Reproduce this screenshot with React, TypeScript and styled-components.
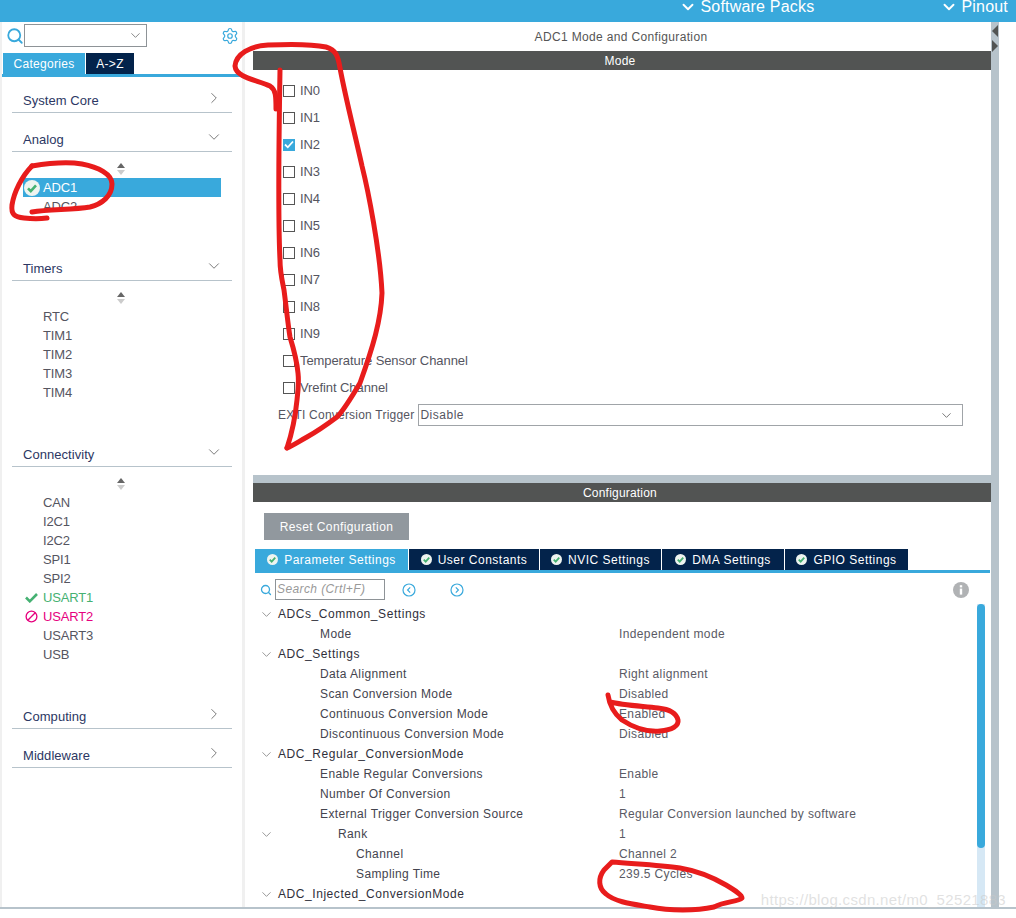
import React from "react";
import styled, { createGlobalStyle } from "styled-components";
import { ChevronDown, ChevronRight, Search, Settings } from "lucide-react";

const GlobalStyle = createGlobalStyle`
  html, body { margin: 0; padding: 0; background: #fff; }
  body { font-family: "Liberation Sans", Arial, sans-serif; overflow: hidden; }
  * { box-sizing: border-box; }
`;

const BLUE = "#39a9dc";
const NAVY = "#03234b";
const GREY = "#b7c3cb";
const BAR = "#525453";
const GREEN = "#45b172";

function CheckDot({ size = 12 }: { size?: number }) {
  return (
    <svg width={size} height={size} viewBox="0 0 16 16">
      <circle cx="8" cy="8" r="8" fill="#eef4f0" />
      <path d="M4 8.3l2.8 2.8L12 5.4" fill="none" stroke={GREEN} strokeWidth="2.6" />
    </svg>
  );
}

function SortArrows() {
  return (
    <svg width="8" height="12" viewBox="0 0 8 12">
      <path d="M4 0l4 5H0z" fill="#666" />
      <path d="M4 12L0 7h8z" fill="#ccc" />
    </svg>
  );
}

function Annotations() {
  return (
    <Ink viewBox="0 0 1016 918">
      <g fill="none" stroke="#e81c1c" strokeLinecap="round" strokeLinejoin="round" strokeWidth="5">
        <path d="M276 109C276 96 276 90 270 86C258 80 236 78 235 66C236 54 250 46 268 45C290 44 312 44 326 47C336 50 338 56 340 68C346 100 354 130 362 166C368 190 380 250 382 293C381 320 373 347 360 383C350 400 340 414 337 417C325 426 316 432 307 437C298 442 292 446 287 448" />
        <path d="M280 70C279 130 278 220 280 260C280 272 282 280 284 290C286 305 288 325 290 337C294 350 297 362 298 373C299 382 298 392 297 400C295 420 291 436 287 448" />
        <path d="M32 166C50 163 70 162 82 164C98 167 112 174 112 184C112 196 102 204 90 207C72 210 50 209 32 212" />
        <path d="M32 166C22 176 14 192 12 205C11 214 14 217 24 218C32 219 40 219 47 218" />
        <path d="M608 695C609 702 612 712 622 720C634 728 648 732 660 731C672 730 679 726 678 720C676 712 668 709 658 708C640 706 622 705 610 702" />
        <path d="M612 862C635 864 660 865 680 868C698 871 714 878 726 885C736 891 742 895 742 898C738 902 726 901 714 907C696 911 670 911 650 907C632 904 615 902 606 894C598 888 598 878 604 870C608 866 610 864 612 862Z" />
      </g>
    </Ink>
  );
}

interface Category {
  name: string;
  open: boolean;
  items?: { label: string; state?: "ok" | "off" | "selected" }[];
}

const categories: Category[] = [
  { name: "System Core", open: false },
  {
    name: "Analog",
    open: true,
    items: [{ label: "ADC1", state: "selected" }, { label: "ADC2" }],
  },
  {
    name: "Timers",
    open: true,
    items: ["RTC", "TIM1", "TIM2", "TIM3", "TIM4"].map((label) => ({ label })),
  },
  {
    name: "Connectivity",
    open: true,
    items: [
      { label: "CAN" },
      { label: "I2C1" },
      { label: "I2C2" },
      { label: "SPI1" },
      { label: "SPI2" },
      { label: "USART1", state: "ok" },
      { label: "USART2", state: "off" },
      { label: "USART3" },
      { label: "USB" },
    ],
  },
  { name: "Computing", open: false },
  { name: "Middleware", open: false },
];

const channels = [
  "IN0", "IN1", "IN2", "IN3", "IN4", "IN5", "IN6", "IN7", "IN8", "IN9",
  "Temperature Sensor Channel", "Vrefint Channel",
];

const configTabs = ["Parameter Settings", "User Constants", "NVIC Settings", "DMA Settings", "GPIO Settings"];
const tabWidths = [153, 130, 121, 122, 123];

const params: { name: string; value?: string; level: number; caret?: boolean }[] = [
  { name: "ADCs_Common_Settings", level: 0, caret: true },
  { name: "Mode", value: "Independent mode", level: 1 },
  { name: "ADC_Settings", level: 0, caret: true },
  { name: "Data Alignment", value: "Right alignment", level: 1 },
  { name: "Scan Conversion Mode", value: "Disabled", level: 1 },
  { name: "Continuous Conversion Mode", value: "Enabled", level: 1 },
  { name: "Discontinuous Conversion Mode", value: "Disabled", level: 1 },
  { name: "ADC_Regular_ConversionMode", level: 0, caret: true },
  { name: "Enable Regular Conversions", value: "Enable", level: 1 },
  { name: "Number Of Conversion", value: "1", level: 1 },
  { name: "External Trigger Conversion Source", value: "Regular Conversion launched by software", level: 1 },
  { name: "Rank", value: "1", level: 2, caret: true },
  { name: "Channel", value: "Channel 2", level: 3 },
  { name: "Sampling Time", value: "239.5 Cycles", level: 3 },
  { name: "ADC_Injected_ConversionMode", level: 0, caret: true },
];

export default function App() {
  return (
    <Page>
      <GlobalStyle />
      <TopBar>
        <TopLink>
          <ChevronDown size={18} strokeWidth={2.5} />
          Software Packs
        </TopLink>
        <TopLink>
          <ChevronDown size={18} strokeWidth={2.5} />
          Pinout
        </TopLink>
      </TopBar>
      <Body>
        <Sidebar>
          <SearchRow>
            <Search size={18} color={BLUE} strokeWidth={2.4} />
            <Combo>
              <ChevronDown size={15} color="#777" strokeWidth={1.4} />
            </Combo>
            <GearSlot>
              <Settings size={18} color={BLUE} strokeWidth={1.6} />
            </GearSlot>
          </SearchRow>
          <SideTabs>
            <SideTab $active $w={82}>Categories</SideTab>
            <SideTab $w={48}>A-&gt;Z</SideTab>
          </SideTabs>
          <Sections>
            {categories.map((c) => (
              <Section key={c.name}>
                <SectionHead>
                  {c.name}
                  {c.open ? (
                    <ChevronDown size={18} color="#777" strokeWidth={1.3} />
                  ) : (
                    <ChevronRight size={18} color="#777" strokeWidth={1.3} />
                  )}
                </SectionHead>
                {c.items && (
                  <ItemList>
                    <SortSlot>
                      <SortArrows />
                    </SortSlot>
                    {c.items.map((it) => (
                      <Item key={it.label} $state={it.state}>
                        <ItemIcon>
                          {it.state === "selected" && <CheckDot size={16} />}
                          {it.state === "ok" && (
                            <svg width="13" height="11" viewBox="0 0 13 11">
                              <path d="M1 5.5l3.8 3.8L12 2" fill="none" stroke={GREEN} strokeWidth="2.6" />
                            </svg>
                          )}
                          {it.state === "off" && (
                            <svg width="13" height="13" viewBox="0 0 13 13">
                              <circle cx="6.5" cy="6.5" r="5.4" fill="none" stroke="#e6007e" strokeWidth="1.3" />
                              <path d="M2.8 10.2l7.4-7.4" stroke="#e6007e" strokeWidth="1.3" />
                            </svg>
                          )}
                        </ItemIcon>
                        {it.label}
                      </Item>
                    ))}
                  </ItemList>
                )}
              </Section>
            ))}
          </Sections>
        </Sidebar>

        <Main>
          <ModePanel>
            <PanelTitle>ADC1 Mode and Configuration</PanelTitle>
            <Bar>Mode</Bar>
            <ChannelList>
              {channels.map((ch) => (
                <ChannelRow key={ch}>
                  <CheckBox $checked={ch === "IN2"}>
                    {ch === "IN2" && (
                      <svg width="10" height="9" viewBox="0 0 10 9">
                        <path d="M1 4.5l2.8 2.8L9 1.5" fill="none" stroke="#fff" strokeWidth="1.8" />
                      </svg>
                    )}
                  </CheckBox>
                  {ch}
                </ChannelRow>
              ))}
            </ChannelList>
            <TriggerRow>
              <TriggerLabel>EXTI Conversion Trigger</TriggerLabel>
              <TriggerSelect>
                Disable
                <ChevronDown size={15} color="#666" strokeWidth={1.4} />
              </TriggerSelect>
            </TriggerRow>
          </ModePanel>

          <ConfigPanel>
            <Bar>Configuration</Bar>
            <ResetButton>Reset Configuration</ResetButton>
            <ConfigTabs>
              {configTabs.map((t, i) => (
                <ConfigTab key={t} $active={i === 0} $w={tabWidths[i]}>
                  <CheckDot size={11} />
                  {t}
                </ConfigTab>
              ))}
            </ConfigTabs>
            <SearchBar>
              <Search size={12} color={BLUE} strokeWidth={2.6} />
              <SearchField>Search (Crtl+F)</SearchField>
              <NavButton $first>
                <svg width="14" height="14" viewBox="0 0 14 14">
                  <circle cx="7" cy="7" r="6" fill="none" stroke={BLUE} strokeWidth="1.2" />
                  <path d="M8.2 4.4L5.6 7l2.6 2.6" fill="none" stroke={BLUE} strokeWidth="1.2" />
                </svg>
              </NavButton>
              <NavButton>
                <svg width="14" height="14" viewBox="0 0 14 14">
                  <circle cx="7" cy="7" r="6" fill="none" stroke={BLUE} strokeWidth="1.2" />
                  <path d="M5.8 4.4L8.4 7l-2.6 2.6" fill="none" stroke={BLUE} strokeWidth="1.2" />
                </svg>
              </NavButton>
              <InfoSlot>
                <svg width="16" height="16" viewBox="0 0 16 16">
                  <circle cx="8" cy="8" r="8" fill="#b0b2b4" />
                  <rect x="6.8" y="6.6" width="2.4" height="6" fill="#fff" />
                  <rect x="6.8" y="3.2" width="2.4" height="2.2" fill="#fff" />
                </svg>
              </InfoSlot>
            </SearchBar>
            <TreeArea>
              <Tree>
                {params.map((p) => (
                  <TreeRow key={p.name}>
                    <TreeName $level={p.level}>
                      {p.caret && (
                        <Caret>
                          <ChevronDown size={15} color="#777" strokeWidth={1.2} />
                        </Caret>
                      )}
                      {p.name}
                    </TreeName>
                    {p.value && <TreeValue>{p.value}</TreeValue>}
                  </TreeRow>
                ))}
              </Tree>
              <ScrollTrack>
                <ScrollThumb />
              </ScrollTrack>
            </TreeArea>
          </ConfigPanel>
        </Main>

        <Gutter>
          <svg width="8" height="30" viewBox="0 0 8 30">
            <path d="M7 2v12L1 8z" fill={BAR} />
            <path d="M1 17v12l6-6z" fill={BAR} />
          </svg>
        </Gutter>
      </Body>
      <BottomLine />
      <Annotations />
      <Watermark>https://blog.csdn.net/m0_52521883</Watermark>
    </Page>
  );
}

const Page = styled.div`
  position: relative;
  width: 1016px;
  height: 918px;
  overflow: hidden;
  background: #fff;
  font-size: 13px;
`;

const Ink = styled.svg`
  position: absolute;
  left: 0;
  top: 0;
  width: 1016px;
  height: 918px;
  pointer-events: none;
`;

const Watermark = styled.div`
  position: absolute;
  right: 10px;
  top: 891px;
  font-size: 15px;
  letter-spacing: 0.33px;
  color: rgba(200, 200, 200, 0.55);
  white-space: nowrap;
`;

const TopBar = styled.div`
  height: 22px;
  background: ${BLUE};
  display: flex;
  justify-content: flex-end;
  align-items: flex-start;
  gap: 126px;
  padding-right: 8px;
`;

const TopLink = styled.div`
  display: flex;
  align-items: center;
  gap: 3px;
  height: 14px;
  line-height: 14px;
  color: #fff;
  font-size: 16px;
  letter-spacing: 0.2px;
`;

const Body = styled.div`
  display: flex;
  height: 885px;
`;

const BottomLine = styled.div`
  height: 2px;
  background: ${GREY};
`;

const Sidebar = styled.aside`
  width: 245px;
  padding-left: 2px;
  background: linear-gradient(to right, #f0f0f0 2px, #fff 2px, #fff 242px, #f0f0f0 242px);
  flex-shrink: 0;
  overflow: hidden;
`;

const SearchRow = styled.div`
  height: 31px;
  display: flex;
  align-items: center;
  padding: 0 0 4px 4px;
`;

const Combo = styled.div`
  width: 123px;
  height: 23px;
  border: 1px solid #8e9397;
  display: flex;
  align-items: center;
  justify-content: flex-end;
  padding-right: 3px;
`;

const GearSlot = styled.div`
  margin-left: 74px;
  display: flex;
`;

const SideTabs = styled.div`
  display: flex;
  gap: 1px;
  height: 24px;
  padding-left: 1px;
  border-bottom: 3px solid ${BLUE};
  width: 240px;
`;

const SideTab = styled.div<{ $active?: boolean; $w: number }>`
  width: ${(p) => p.$w}px;
  background: ${(p) => (p.$active ? BLUE : NAVY)};
  color: #fff;
  font-size: 12px;
  letter-spacing: 0.3px;
  display: flex;
  align-items: center;
  justify-content: center;
`;

const Sections = styled.div`
  padding: 10px 10px 0;
  width: 240px;
`;

const Section = styled.section`
  & + & {
    margin-top: 13px;
  }
`;

const SectionHead = styled.div`
  height: 26px;
  display: flex;
  justify-content: space-between;
  align-items: center;
  padding: 1px 9px 0 11px;
  border-bottom: 1px solid ${GREY};
  color: #2c3763;
  font-size: 13px;
  letter-spacing: 0.05px;

  svg {
    margin-top: -5px;
  }
`;

const ItemList = styled.div`
  padding-bottom: 26px;
`;

const SortSlot = styled.div`
  height: 26px;
  padding-top: 11px;
  padding-left: 105px;
  line-height: 0;
`;

const itemColor = (s?: string) =>
  s === "selected" ? "#fff" : s === "ok" ? GREEN : s === "off" ? "#e6007e" : "#55555f";

const Item = styled.div<{ $state?: string }>`
  height: 19px;
  width: 198px;
  margin-left: 11px;
  display: flex;
  align-items: center;
  background: ${(p) => (p.$state === "selected" ? BLUE : "transparent")};
  color: ${(p) => itemColor(p.$state)};
  letter-spacing: -0.15px;
`;

const ItemIcon = styled.span`
  width: 20px;
  padding-right: 3px;
  display: flex;
  align-items: center;
  justify-content: center;
`;

const Main = styled.main`
  width: 738px;
  margin-left: 8px;
  background: ${GREY};
  display: flex;
  flex-direction: column;
  gap: 8px;
  flex-shrink: 0;
`;

const Gutter = styled.div`
  width: 8px;
  background: ${GREY};
  padding-top: 1px;
  line-height: 0;
`;

const ModePanel = styled.div`
  height: 453px;
  background: #fff;
  flex-shrink: 0;
`;

const PanelTitle = styled.div`
  height: 29px;
  display: flex;
  align-items: center;
  justify-content: center;
  padding-right: 2px;
  font-size: 12px;
  letter-spacing: 0.35px;
  color: #555;
`;

const Bar = styled.div`
  height: 19px;
  background: ${BAR};
  color: #fff;
  font-size: 12px;
  letter-spacing: 0.2px;
  padding-right: 4px;
  display: flex;
  align-items: center;
  justify-content: center;
`;

const ChannelList = styled.div`
  padding: 7px 0 0 30px;
`;

const ChannelRow = styled.div`
  height: 27px;
  display: flex;
  align-items: center;
  gap: 5px;
  color: #55555f;
  letter-spacing: -0.08px;
`;

const CheckBox = styled.span<{ $checked?: boolean }>`
  width: 12px;
  height: 12px;
  border: 1px solid ${(p) => (p.$checked ? BLUE : "#555")};
  background: ${(p) => (p.$checked ? BLUE : "#fff")};
  display: flex;
  align-items: center;
  justify-content: center;
`;

const TriggerRow = styled.div`
  display: flex;
  align-items: center;
  gap: 4px;
  height: 22px;
  margin-top: 3px;
  padding-left: 25px;
`;

const TriggerLabel = styled.span`
  color: #55555f;
  font-size: 12px;
  letter-spacing: 0.22px;
`;

const TriggerSelect = styled.div`
  width: 545px;
  height: 22px;
  border: 1px solid #a0a4a8;
  padding: 0 8px 0 1px;
  display: flex;
  align-items: center;
  justify-content: space-between;
  color: #55555f;
  font-size: 12px;
  letter-spacing: 0.5px;
`;

const ConfigPanel = styled.div`
  flex: 1;
  min-height: 0;
  background: #fff;
  display: flex;
  flex-direction: column;
`;

const ResetButton = styled.div`
  width: 145px;
  height: 27px;
  margin: 11px 0 9px 11px;
  background: #91989e;
  color: #fff;
  font-size: 12px;
  letter-spacing: 0.4px;
  display: flex;
  align-items: center;
  justify-content: center;
`;

const ConfigTabs = styled.div`
  display: flex;
  gap: 1px;
  height: 24px;
  margin-left: 2px;
  border-bottom: 3px solid ${BLUE};
  width: 735px;
  flex-shrink: 0;
`;

const ConfigTab = styled.div<{ $active?: boolean; $w: number }>`
  width: ${(p) => p.$w}px;
  background: ${(p) => (p.$active ? BLUE : NAVY)};
  color: #fff;
  font-size: 12px;
  letter-spacing: 0.5px;
  display: flex;
  align-items: center;
  justify-content: center;
  gap: 6px;
`;

const SearchBar = styled.div`
  height: 31px;
  display: flex;
  align-items: center;
  padding: 2px 0 0 7px;
  flex-shrink: 0;
`;

const SearchField = styled.div`
  width: 110px;
  height: 21px;
  margin-left: 3px;
  border: 1px solid #8e9397;
  padding-left: 1px;
  color: #999;
  font-size: 12px;
  font-style: italic;
  line-height: 19px;
  letter-spacing: 0.4px;
`;

const NavButton = styled.div<{ $first?: boolean }>`
  margin-left: ${(p) => (p.$first ? 17 : 34)}px;
  display: flex;
`;

const InfoSlot = styled.div`
  margin-left: auto;
  margin-right: 22px;
  display: flex;
`;

const TreeArea = styled.div`
  flex: 1;
  min-height: 0;
  display: flex;
  overflow: hidden;
`;

const Tree = styled.div`
  flex: 1;
  overflow: hidden;
`;

const TreeRow = styled.div`
  height: 20px;
  display: flex;
  align-items: center;
`;

const TreeName = styled.div<{ $level: number }>`
  position: relative;
  width: 366px;
  padding-left: ${(p) => [25, 67, 85, 103][p.$level]}px;
  font-size: 12px;
  letter-spacing: ${(p) => (p.$level === 0 ? 0.56 : 0.39)}px;
  color: ${(p) => (p.$level === 0 ? "#2f2f3a" : "#44444e")};
  white-space: nowrap;
`;

const Caret = styled.span`
  position: absolute;
  left: 6px;
  top: 0;
  display: flex;
`;

const TreeValue = styled.div`
  font-size: 12px;
  letter-spacing: 0.37px;
  color: #5a5a64;
  white-space: nowrap;
`;

const ScrollTrack = styled.div`
  width: 8px;
  margin-right: 6px;
  background: #d6e8f5;
`;

const ScrollThumb = styled.div`
  height: 244px;
  background: ${BLUE};
  border-radius: 4px;
`;
